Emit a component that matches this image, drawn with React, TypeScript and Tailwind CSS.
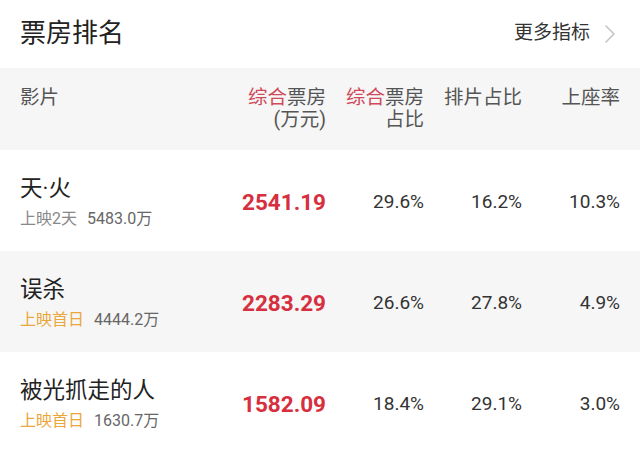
type Movie = {
  name: string;
  release: string;
  first: boolean;
  total: string;
  box: string;
  share: string;
  slot: string;
  seat: string;
};

const movies: Movie[] = [
  { name: '天·火', release: '上映2天', first: false, total: '5483.0万', box: '2541.19', share: '29.6%', slot: '16.2%', seat: '10.3%' },
  { name: '误杀', release: '上映首日', first: true, total: '4444.2万', box: '2283.29', share: '26.6%', slot: '27.8%', seat: '4.9%' },
  { name: '被光抓走的人', release: '上映首日', first: true, total: '1630.7万', box: '1582.09', share: '18.4%', slot: '29.1%', seat: '3.0%' },
];

const font = "font-['Roboto','Noto_Sans_CJK_SC',sans-serif]";

export default function App() {
  return (
    <div className={`w-[640px] h-[449px] overflow-hidden bg-white ${font}`}>
      {/* Title bar */}
      <div className="h-[68px] flex items-center justify-between pl-5 pr-[25px]">
        <h1 className="text-[26px] text-[#222] leading-none -mt-[2px]">票房排名</h1>
        <div className="flex items-center gap-[15px] text-[19px] text-[#333] -mt-[1px]">
          <span>更多指标</span>
          <svg width="10" height="18" viewBox="0 0 10 18" fill="none" className="text-[#c4c4c4]">
            <path d="M1 1 L9 9 L1 17" stroke="currentColor" strokeWidth="1.6" strokeLinecap="round" strokeLinejoin="round" />
          </svg>
        </div>
      </div>

      {/* Column header */}
      <div className="h-[82px] bg-[#f6f6f6] grid grid-cols-[208px_98px_98px_98px_98px] px-5 pt-[19px] text-[19.5px] leading-[22px] text-[#555]">
        <div>影片</div>
        <div className="text-right">
          <div><span className="text-[#cf4a5a]">综合</span>票房</div>
          <div>(万元)</div>
        </div>
        <div className="text-right">
          <div><span className="text-[#cf4a5a]">综合</span>票房</div>
          <div>占比</div>
        </div>
        <div className="text-right">排片占比</div>
        <div className="text-right">上座率</div>
      </div>

      {/* Rows */}
      {movies.map((m, i) => (
        <div
          key={m.name}
          className={`h-[101px] grid grid-cols-[208px_98px_98px_98px_98px] items-center px-5 ${i % 2 === 1 ? 'bg-[#f6f6f6]' : 'bg-white'}`}
        >
          <div className="flex flex-col gap-[8px] mt-[3px]">
            <div className="text-[22.5px] leading-[26px] text-[#222]">{m.name}</div>
            <div className="flex items-center gap-[10px] text-[16px] leading-[20px]">
              <span className={m.first ? 'text-[#eba63c]' : 'text-[#888]'}>{m.release}</span>
              <span className="text-[#666]">{m.total}</span>
            </div>
          </div>
          <div className="text-right text-[22.5px] font-bold text-[#d62f40] mt-[4px]">{m.box}</div>
          <div className="text-right text-[19px] text-[#333] mt-[4px]">{m.share}</div>
          <div className="text-right text-[19px] text-[#333] mt-[4px]">{m.slot}</div>
          <div className="text-right text-[19px] text-[#333] mt-[4px]">{m.seat}</div>
        </div>
      ))}
    </div>
  );
}
